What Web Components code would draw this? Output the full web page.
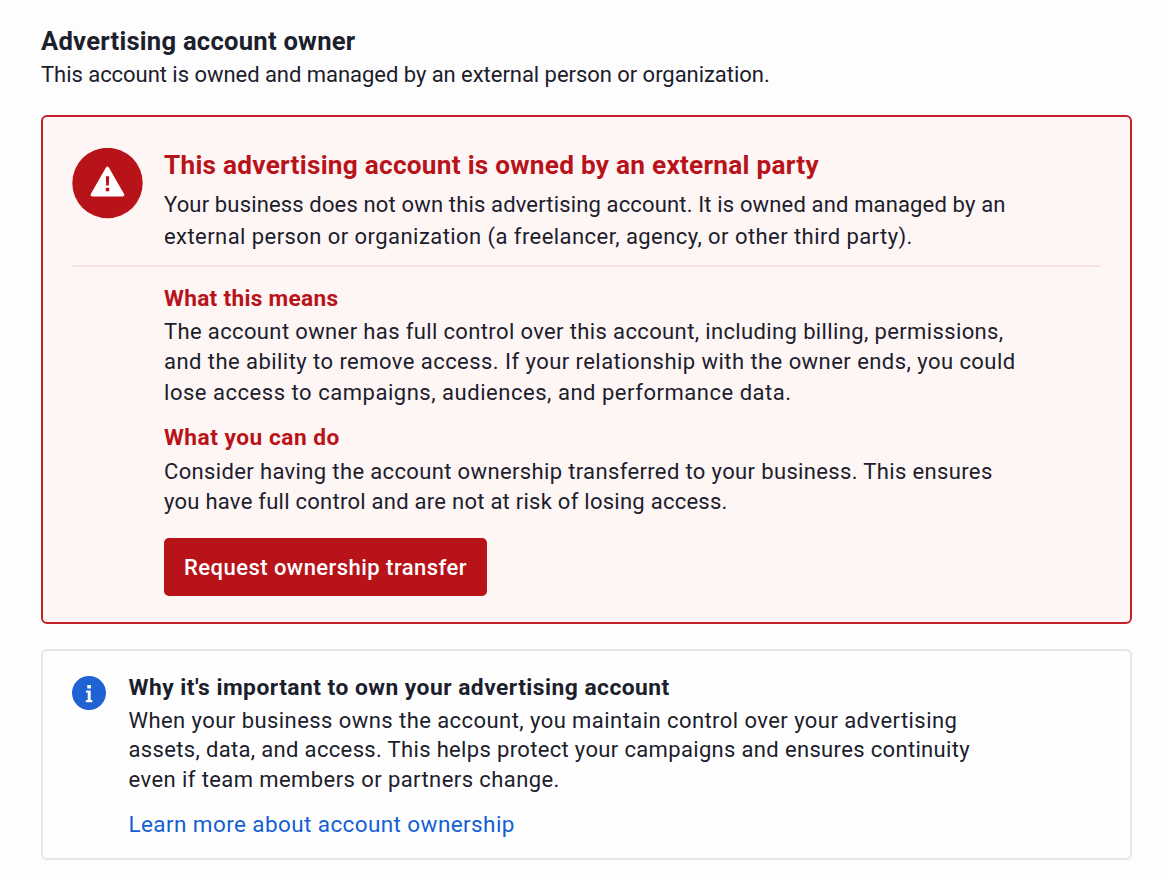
<!DOCTYPE html>
<html lang="en">
<head>
<meta charset="UTF-8">
<title>Advertising account owner</title>
<style>
    body {
        margin: 0;
        padding: 25px 36px 20px 41px;
        background: #fdfdfd;
        color: #1b202c;
        font-family: Roboto, sans-serif;
        font-size: 22px;
    }
</style>
</head>
<body>
    <page-heading>
        <span slot="title">Advertising account owner</span>
        <text-line track="-0.04">This account is owned and managed by an external person or organization.</text-line>
    </page-heading>

    <alert-card>
        <span slot="title">This advertising account is owned by an external party</span>
        <text-line slot="summary" track="0.15">Your business does not own this advertising account. It is owned and managed by an</text-line>
        <text-line slot="summary" track="0.44">external person or organization (a freelancer, agency, or other third party).</text-line>
        <info-section track="0.29">
            <span slot="title">What this means</span>
            <text-line track="0.37">The account owner has full control over this account, including billing, permissions,</text-line>
            <text-line track="0.45">and the ability to remove access. If your relationship with the owner ends, you could</text-line>
            <text-line track="0.53">lose access to campaigns, audiences, and performance data.</text-line>
        </info-section>
        <info-section track="0.5">
            <span slot="title">What you can do</span>
            <text-line track="0.36">Consider having the account ownership transferred to your business. This ensures</text-line>
            <text-line track="0.26">you have full control and are not at risk of losing access.</text-line>
        </info-section>
        <action-button slot="action">Request ownership transfer</action-button>
    </alert-card>

    <note-card>
        <span slot="title">Why it's important to own your advertising account</span>
        <text-line track="0.44">When your business owns the account, you maintain control over your advertising</text-line>
        <text-line track="0.34">assets, data, and access. This helps protect your campaigns and ensures continuity</text-line>
        <text-line track="0.42">even if team members or partners change.</text-line>
        <text-link slot="link">Learn more about account ownership</text-link>
    </note-card>

<script>
class TextLine extends HTMLElement {
    constructor() {
        super();
        this.attachShadow({mode: "open"});
        this.shadowRoot.innerHTML = `
            <style>
                :host { display: block; white-space: nowrap; }
            </style>
            <slot></slot>
        `;
    }

    connectedCallback() {
        this.style.letterSpacing = `${this.getAttribute('track') || 0}px`;
    }
}

class PageHeading extends HTMLElement {
    constructor() {
        super();
        this.attachShadow({mode: "open"});
        this.shadowRoot.innerHTML = `
            <style>
                :host { display: block; }
                h1 {
                    margin: 0 0 3px;
                    font-size: 25.6px;
                    line-height: 32px;
                    letter-spacing: 0.25px;
                }
                div { line-height: 30px; }
            </style>
            <h1><slot name="title"></slot></h1>
            <div><slot></slot></div>
        `;
    }
}

class AlertCard extends HTMLElement {
    constructor() {
        super();
        this.attachShadow({mode: "open"});
        this.shadowRoot.innerHTML = `
            <style>
                :host {
                    display: block;
                    box-sizing: border-box;
                    height: 509px;
                    margin-top: 25px;
                    padding: 31px 29px 0;
                    border: 2px solid #c3222b;
                    border-radius: 6px;
                    background: #fef5f5;
                }
                header {
                    display: grid;
                    grid-template-columns: 71px 1fr;
                    column-gap: 21px;
                    padding-bottom: 12px;
                    border-bottom: 2px solid #f8e3e4;
                }
                svg { display: block; }
                h2 {
                    margin: 0 0 7px;
                    color: #b9131a;
                    font-size: 26.2px;
                    line-height: 34px;
                    letter-spacing: 0.26px;
                }
                .summary { line-height: 32px; }
                .body {
                    display: flex;
                    flex-direction: column;
                    align-items: flex-start;
                    gap: 16px;
                    margin: 17.6px 0 0 92px;
                    line-height: 30.4px;
                }
                .action { margin-top: 4.6px; }
            </style>
            <header>
                <svg width="71" height="71" viewBox="0 0 71 71">
                    <circle cx="35.5" cy="35" r="35.2" fill="#b9131a"/>
                    <path d="M35.4 20.4 L50.6 46.8 H20.3 Z" fill="#fff" stroke="#fff" stroke-width="3.4" stroke-linejoin="round"/>
                    <path d="M33.8 28.2 H37.2 L36.8 37.6 H34.2 Z M33.8 39.8 H37.2 V43.2 H33.8 Z" fill="#b9131a"/>
                </svg>
                <div>
                    <h2><slot name="title"></slot></h2>
                    <div class="summary"><slot name="summary"></slot></div>
                </div>
            </header>
            <div class="body">
                <slot></slot>
                <div class="action"><slot name="action"></slot></div>
            </div>
        `;
    }
}

class InfoSection extends HTMLElement {
    constructor() {
        super();
        this.attachShadow({mode: "open"});
        this.shadowRoot.innerHTML = `
            <style>
                :host { display: block; }
                h3 {
                    margin: 0 0 4.4px;
                    color: #b9131a;
                    font-size: 22.7px;
                    line-height: 28px;
                }
            </style>
            <h3><slot name="title"></slot></h3>
            <slot></slot>
        `;
    }

    connectedCallback() {
        this.shadowRoot.querySelector('h3').style.letterSpacing = `${this.getAttribute('track') || 0}px`;
    }
}

class ActionButton extends HTMLElement {
    constructor() {
        super();
        this.attachShadow({mode: "open"});
        this.shadowRoot.innerHTML = `
            <style>
                :host { display: block; }
                button {
                    display: block;
                    width: 323px;
                    height: 58px;
                    padding: 0;
                    border: 0;
                    border-radius: 5px;
                    background: #b9131a;
                    color: #fff;
                    font: 500 22px Roboto, sans-serif;
                    letter-spacing: 0.46px;
                    white-space: nowrap;
                    cursor: pointer;
                }
            </style>
            <button type="button"><slot></slot></button>
        `;
    }
}

class NoteCard extends HTMLElement {
    constructor() {
        super();
        this.attachShadow({mode: "open"});
        this.shadowRoot.innerHTML = `
            <style>
                :host {
                    display: grid;
                    grid-template-columns: 34px 1fr;
                    column-gap: 22.5px;
                    box-sizing: border-box;
                    height: 211px;
                    margin-top: 25px;
                    padding: 23px 29px 0;
                    border: 2px solid #e4e6ea;
                    border-radius: 6px;
                    background: #fefefe;
                }
                svg { display: block; margin-top: 2px; }
                h3 {
                    margin: 0 0 3.8px;
                    font-size: 22.8px;
                    line-height: 28px;
                    letter-spacing: 0.47px;
                }
                .text { line-height: 29.6px; }
                .link { margin-top: 15.2px; line-height: 28px; }
            </style>
            <svg width="34" height="34" viewBox="0 0 34 34">
                <circle cx="17" cy="17" r="17" fill="#1f62d4"/>
                <path d="M15.3 9 H18.9 V12.4 H15.3 Z M14 14.5 H18.7 V24 H20.3 V26.2 H13.8 V24 H15.7 V16.6 H14 Z" fill="#fff"/>
            </svg>
            <div>
                <h3><slot name="title"></slot></h3>
                <div class="text"><slot></slot></div>
                <div class="link"><slot name="link"></slot></div>
            </div>
        `;
    }
}

class TextLink extends HTMLElement {
    constructor() {
        super();
        this.attachShadow({mode: "open"});
        this.shadowRoot.innerHTML = `
            <style>
                a {
                    color: #1460d4;
                    font-size: 22.5px;
                    letter-spacing: 0.4px;
                    text-decoration: none;
                }
            </style>
            <a href="#"><slot></slot></a>
        `;
    }
}

customElements.define('text-line', TextLine)
customElements.define('page-heading', PageHeading)
customElements.define('alert-card', AlertCard)
customElements.define('info-section', InfoSection)
customElements.define('action-button', ActionButton)
customElements.define('note-card', NoteCard)
customElements.define('text-link', TextLink)
</script>
</body>
</html>
